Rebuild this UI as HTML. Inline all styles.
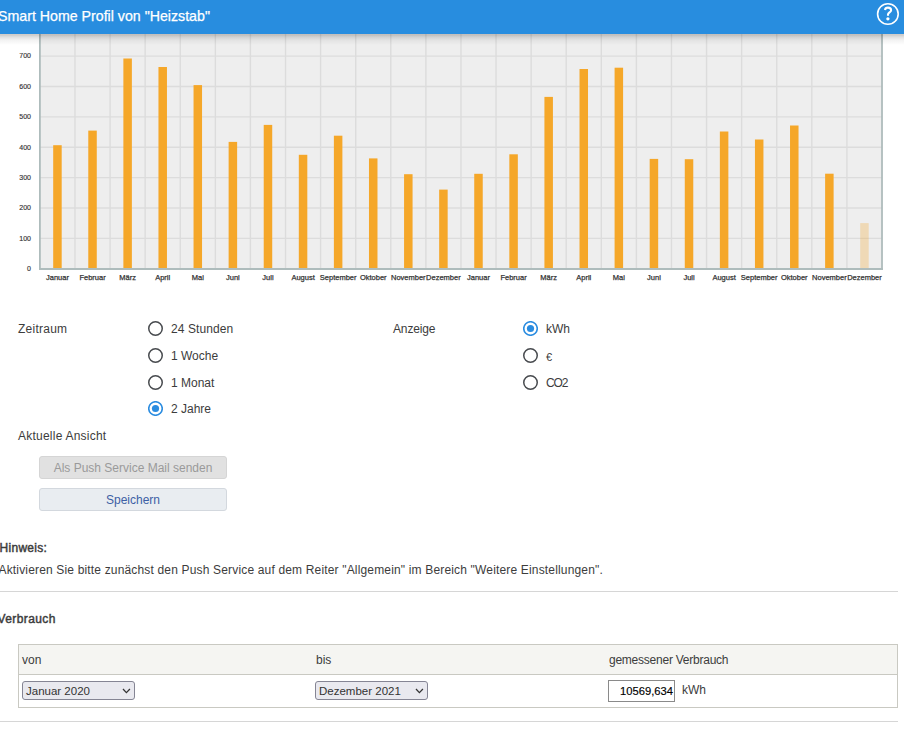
<!DOCTYPE html>
<html><head><meta charset="utf-8">
<style>
html,body{margin:0;padding:0;background:#fff;width:904px;height:732px;overflow:hidden;position:relative;font-family:"Liberation Sans",sans-serif;color:#3c3c3c}
.abs{position:absolute;white-space:nowrap}
#hdr{position:absolute;left:0;top:0;width:904px;height:34px;background:#288ddf;z-index:3}
#shadow{position:absolute;left:0;top:34px;width:904px;height:11px;background:linear-gradient(rgba(90,50,20,0.24) 0px,rgba(0,0,0,0.2) 1px,rgba(0,0,0,0.12) 3px,rgba(0,0,0,0.05) 6px,rgba(0,0,0,0) 11px);z-index:2}
#title{position:absolute;left:-2px;top:8px;font-size:14.2px;color:#fff;line-height:16px;-webkit-text-stroke:0.25px #fff}
#chart{position:absolute;left:0;top:0;z-index:1}
.yl{font-family:"Liberation Sans",sans-serif;font-size:7px;fill:#333;stroke:#333;stroke-width:0.15px}
.xl{font-family:"Liberation Sans",sans-serif;font-size:7.5px;fill:#333;stroke:#333;stroke-width:0.25px}
.t{position:absolute;white-space:nowrap;font-size:12px;line-height:14px;color:#3c3c3c}
.radio{position:absolute;width:12.4px;height:12.4px;border:1.6px solid #474747;border-radius:50%;box-sizing:content-box}
.radio.on{border-color:#2a8ce0}
.radio.on::after{content:"";position:absolute;left:2.6px;top:2.6px;width:7.2px;height:7.2px;border-radius:50%;background:#2a8ce0}
.btn{position:absolute;box-sizing:border-box;border-radius:3px;font-size:12px;text-align:center;line-height:22px}
.hr{position:absolute;left:0;width:898px;height:1px;background:#d6d6d6}
</style></head><body>
<div id="hdr"><div id="title">Smart Home Profil von "Heizstab"</div>
<svg style="position:absolute;left:864px;top:0" width="40" height="34" viewBox="0 0 40 34">
<circle cx="23.9" cy="14" r="10.3" fill="none" stroke="#fff" stroke-width="1.6"/>
<path d="M21.0 10.0 C21.2 8.4 22.4 7.6 24.0 7.6 C25.9 7.6 27.1 8.7 27.1 10.2 C27.1 12.3 24.0 12.6 24.0 14.6 L24.0 15.8" fill="none" stroke="#fff" stroke-width="2.1"/>
<circle cx="23.9" cy="18.8" r="1.65" fill="#fff"/>
</svg></div>
<div id="shadow"></div>
<svg id="chart" width="904" height="290" viewBox="0 0 904 290">
<rect x="39.9" y="34" width="842.1" height="235.0" fill="#eeeeee"/>
<line x1="39.9" x2="882.0" y1="238.42" y2="238.42" stroke="#dcdcdc" stroke-width="1.4"/>
<line x1="39.9" x2="882.0" y1="208.04" y2="208.04" stroke="#dcdcdc" stroke-width="1.4"/>
<line x1="39.9" x2="882.0" y1="177.66" y2="177.66" stroke="#dcdcdc" stroke-width="1.4"/>
<line x1="39.9" x2="882.0" y1="147.28" y2="147.28" stroke="#dcdcdc" stroke-width="1.4"/>
<line x1="39.9" x2="882.0" y1="116.90" y2="116.90" stroke="#dcdcdc" stroke-width="1.4"/>
<line x1="39.9" x2="882.0" y1="86.52" y2="86.52" stroke="#dcdcdc" stroke-width="1.4"/>
<line x1="39.9" x2="882.0" y1="56.14" y2="56.14" stroke="#dcdcdc" stroke-width="1.4"/>
<line x1="74.99" x2="74.99" y1="34" y2="269.0" stroke="#dcdcdc" stroke-width="1.4"/>
<line x1="110.07" x2="110.07" y1="34" y2="269.0" stroke="#dcdcdc" stroke-width="1.4"/>
<line x1="145.16" x2="145.16" y1="34" y2="269.0" stroke="#dcdcdc" stroke-width="1.4"/>
<line x1="180.25" x2="180.25" y1="34" y2="269.0" stroke="#dcdcdc" stroke-width="1.4"/>
<line x1="215.34" x2="215.34" y1="34" y2="269.0" stroke="#dcdcdc" stroke-width="1.4"/>
<line x1="250.42" x2="250.42" y1="34" y2="269.0" stroke="#dcdcdc" stroke-width="1.4"/>
<line x1="285.51" x2="285.51" y1="34" y2="269.0" stroke="#dcdcdc" stroke-width="1.4"/>
<line x1="320.60" x2="320.60" y1="34" y2="269.0" stroke="#dcdcdc" stroke-width="1.4"/>
<line x1="355.69" x2="355.69" y1="34" y2="269.0" stroke="#dcdcdc" stroke-width="1.4"/>
<line x1="390.77" x2="390.77" y1="34" y2="269.0" stroke="#dcdcdc" stroke-width="1.4"/>
<line x1="425.86" x2="425.86" y1="34" y2="269.0" stroke="#dcdcdc" stroke-width="1.4"/>
<line x1="460.95" x2="460.95" y1="34" y2="269.0" stroke="#dcdcdc" stroke-width="1.4"/>
<line x1="496.04" x2="496.04" y1="34" y2="269.0" stroke="#dcdcdc" stroke-width="1.4"/>
<line x1="531.12" x2="531.12" y1="34" y2="269.0" stroke="#dcdcdc" stroke-width="1.4"/>
<line x1="566.21" x2="566.21" y1="34" y2="269.0" stroke="#dcdcdc" stroke-width="1.4"/>
<line x1="601.30" x2="601.30" y1="34" y2="269.0" stroke="#dcdcdc" stroke-width="1.4"/>
<line x1="636.39" x2="636.39" y1="34" y2="269.0" stroke="#dcdcdc" stroke-width="1.4"/>
<line x1="671.47" x2="671.47" y1="34" y2="269.0" stroke="#dcdcdc" stroke-width="1.4"/>
<line x1="706.56" x2="706.56" y1="34" y2="269.0" stroke="#dcdcdc" stroke-width="1.4"/>
<line x1="741.65" x2="741.65" y1="34" y2="269.0" stroke="#dcdcdc" stroke-width="1.4"/>
<line x1="776.74" x2="776.74" y1="34" y2="269.0" stroke="#dcdcdc" stroke-width="1.4"/>
<line x1="811.82" x2="811.82" y1="34" y2="269.0" stroke="#dcdcdc" stroke-width="1.4"/>
<line x1="846.91" x2="846.91" y1="34" y2="269.0" stroke="#dcdcdc" stroke-width="1.4"/>
<rect x="53.19" y="145.2" width="8.5" height="123.80" fill="#f5a729"/>
<rect x="88.28" y="130.6" width="8.5" height="138.40" fill="#f5a729"/>
<rect x="123.37" y="58.5" width="8.5" height="210.50" fill="#f5a729"/>
<rect x="158.46" y="67" width="8.5" height="202.00" fill="#f5a729"/>
<rect x="193.54" y="85.1" width="8.5" height="183.90" fill="#f5a729"/>
<rect x="228.63" y="141.9" width="8.5" height="127.10" fill="#f5a729"/>
<rect x="263.72" y="124.9" width="8.5" height="144.10" fill="#f5a729"/>
<rect x="298.81" y="154.8" width="8.5" height="114.20" fill="#f5a729"/>
<rect x="333.89" y="135.7" width="8.5" height="133.30" fill="#f5a729"/>
<rect x="368.98" y="158.4" width="8.5" height="110.60" fill="#f5a729"/>
<rect x="404.07" y="174.2" width="8.5" height="94.80" fill="#f5a729"/>
<rect x="439.16" y="189.6" width="8.5" height="79.40" fill="#f5a729"/>
<rect x="474.24" y="173.8" width="8.5" height="95.20" fill="#f5a729"/>
<rect x="509.33" y="154.3" width="8.5" height="114.70" fill="#f5a729"/>
<rect x="544.42" y="96.9" width="8.5" height="172.10" fill="#f5a729"/>
<rect x="579.51" y="69" width="8.5" height="200.00" fill="#f5a729"/>
<rect x="614.59" y="67.7" width="8.5" height="201.30" fill="#f5a729"/>
<rect x="649.68" y="158.9" width="8.5" height="110.10" fill="#f5a729"/>
<rect x="684.77" y="159.2" width="8.5" height="109.80" fill="#f5a729"/>
<rect x="719.86" y="131.5" width="8.5" height="137.50" fill="#f5a729"/>
<rect x="754.94" y="139.5" width="8.5" height="129.50" fill="#f5a729"/>
<rect x="790.03" y="125.5" width="8.5" height="143.50" fill="#f5a729"/>
<rect x="825.12" y="173.7" width="8.5" height="95.30" fill="#f5a729"/>
<rect x="860.21" y="223.1" width="8.5" height="45.90" fill="#f5a729" fill-opacity="0.28"/>
<line x1="39.9" x2="39.9" y1="34" y2="269.9" stroke="#aebcbc" stroke-width="1.8"/>
<line x1="882.0" x2="882.0" y1="34" y2="269.9" stroke="#aebcbc" stroke-width="1.8"/>
<line x1="39.0" x2="882.9" y1="269.0" y2="269.0" stroke="#aebcbc" stroke-width="1.8"/>
<text x="31" y="271.10" text-anchor="end" class="yl">0</text>
<text x="31" y="240.72" text-anchor="end" class="yl">100</text>
<text x="31" y="210.34" text-anchor="end" class="yl">200</text>
<text x="31" y="179.96" text-anchor="end" class="yl">300</text>
<text x="31" y="149.58" text-anchor="end" class="yl">400</text>
<text x="31" y="119.20" text-anchor="end" class="yl">500</text>
<text x="31" y="88.82" text-anchor="end" class="yl">600</text>
<text x="31" y="58.44" text-anchor="end" class="yl">700</text>
<text x="57.44" y="279.8" text-anchor="middle" class="xl">Januar</text>
<text x="92.53" y="279.8" text-anchor="middle" class="xl">Februar</text>
<text x="127.62" y="279.8" text-anchor="middle" class="xl">März</text>
<text x="162.71" y="279.8" text-anchor="middle" class="xl">April</text>
<text x="197.79" y="279.8" text-anchor="middle" class="xl">Mai</text>
<text x="232.88" y="279.8" text-anchor="middle" class="xl">Juni</text>
<text x="267.97" y="279.8" text-anchor="middle" class="xl">Juli</text>
<text x="303.06" y="279.8" text-anchor="middle" class="xl">August</text>
<text x="338.14" y="279.8" text-anchor="middle" class="xl">September</text>
<text x="373.23" y="279.8" text-anchor="middle" class="xl">Oktober</text>
<text x="408.32" y="279.8" text-anchor="middle" class="xl">November</text>
<text x="443.41" y="279.8" text-anchor="middle" class="xl">Dezember</text>
<text x="478.49" y="279.8" text-anchor="middle" class="xl">Januar</text>
<text x="513.58" y="279.8" text-anchor="middle" class="xl">Februar</text>
<text x="548.67" y="279.8" text-anchor="middle" class="xl">März</text>
<text x="583.76" y="279.8" text-anchor="middle" class="xl">April</text>
<text x="618.84" y="279.8" text-anchor="middle" class="xl">Mai</text>
<text x="653.93" y="279.8" text-anchor="middle" class="xl">Juni</text>
<text x="689.02" y="279.8" text-anchor="middle" class="xl">Juli</text>
<text x="724.11" y="279.8" text-anchor="middle" class="xl">August</text>
<text x="759.19" y="279.8" text-anchor="middle" class="xl">September</text>
<text x="794.28" y="279.8" text-anchor="middle" class="xl">Oktober</text>
<text x="829.37" y="279.8" text-anchor="middle" class="xl">November</text>
<text x="864.46" y="279.8" text-anchor="middle" class="xl">Dezember</text>
</svg>

<div class="t" style="left:18px;top:322px;letter-spacing:0.25px">Zeitraum</div>
<svg style="position:absolute;left:148.0px;top:321.0px" width="15" height="15"><circle cx="7.5" cy="7.5" r="6.75" fill="none" stroke="#474a4e" stroke-width="1.5"/></svg>
<div class="t" style="left:171px;top:322px;letter-spacing:0.1px">24 Stunden</div>
<svg style="position:absolute;left:148.0px;top:347.9px" width="15" height="15"><circle cx="7.5" cy="7.5" r="6.75" fill="none" stroke="#474a4e" stroke-width="1.5"/></svg>
<div class="t" style="left:171px;top:349px">1 Woche</div>
<svg style="position:absolute;left:148.0px;top:375.0px" width="15" height="15"><circle cx="7.5" cy="7.5" r="6.75" fill="none" stroke="#474a4e" stroke-width="1.5"/></svg>
<div class="t" style="left:171px;top:376px">1 Monat</div>
<svg style="position:absolute;left:148.0px;top:400.9px" width="15" height="15"><circle cx="7.5" cy="7.5" r="6.75" fill="none" stroke="#2a8ce0" stroke-width="1.6"/><circle cx="7.5" cy="7.5" r="3.6" fill="#2a8ce0"/></svg>
<div class="t" style="left:171px;top:402px">2 Jahre</div>

<div class="t" style="left:393px;top:322px;letter-spacing:-0.15px">Anzeige</div>
<svg style="position:absolute;left:523.0px;top:321.0px" width="15" height="15"><circle cx="7.5" cy="7.5" r="6.75" fill="none" stroke="#2a8ce0" stroke-width="1.6"/><circle cx="7.5" cy="7.5" r="3.6" fill="#2a8ce0"/></svg>
<div class="t" style="left:546px;top:322px">kWh</div>
<svg style="position:absolute;left:523.0px;top:347.9px" width="15" height="15"><circle cx="7.5" cy="7.5" r="6.75" fill="none" stroke="#474a4e" stroke-width="1.5"/></svg>
<div class="t" style="left:546px;top:349.5px;font-size:11px">€</div>
<svg style="position:absolute;left:523.0px;top:375.0px" width="15" height="15"><circle cx="7.5" cy="7.5" r="6.75" fill="none" stroke="#474a4e" stroke-width="1.5"/></svg>
<div class="t" style="left:546px;top:376px;letter-spacing:-1.1px">CO2</div>

<div class="t" style="left:18px;top:429px;letter-spacing:0.23px">Aktuelle Ansicht</div>
<div class="btn" style="left:39px;top:456px;width:188px;height:23px;background:#e1e1e1;border:1px solid #d5d5d5;color:#9a9a9a">Als Push Service Mail senden</div>
<div class="btn" style="left:39px;top:488px;width:188px;height:23px;background:#e9edf1;border:1px solid #d3d8de;color:#3d5fa5">Speichern</div>

<div class="t" style="left:-0.5px;top:541px;-webkit-text-stroke:0.45px #3c3c3c;letter-spacing:0.3px">Hinweis:</div>
<div class="t" style="left:-1.5px;top:563px;letter-spacing:0.165px">Aktivieren Sie bitte zunächst den Push Service auf dem Reiter "Allgemein" im Bereich "Weitere Einstellungen".</div>
<div class="hr" style="top:591px"></div>
<div class="t" style="left:-2.5px;top:612px;-webkit-text-stroke:0.45px #3c3c3c;letter-spacing:0.4px">Verbrauch</div>

<div style="position:absolute;left:18px;top:644px;width:880px;height:64px;box-sizing:border-box;border:1px solid #c9c9c2"></div>
<div style="position:absolute;left:19px;top:645px;width:878px;height:29px;background:#f5f5f2;border-bottom:1px solid #c9c9c2"></div>
<div class="t" style="left:22px;top:653px">von</div>
<div class="t" style="left:316px;top:653px">bis</div>
<div class="t" style="left:609px;top:653px;letter-spacing:-0.24px">gemessener Verbrauch</div>

<div style="position:absolute;left:22px;top:681px;width:113px;height:19px;box-sizing:border-box;border:1px solid #858594;border-radius:3px;background:#e9e9ef"></div>
<div class="t" style="left:26px;top:684px;color:#333;font-size:11.5px">Januar 2020</div>
<svg style="position:absolute;left:120px;top:685px" width="12" height="10"><path d="M3 4 L6.4 7.6 L9.9 4" fill="none" stroke="#333" stroke-width="1.3"/></svg>
<div style="position:absolute;left:315px;top:681px;width:113px;height:19px;box-sizing:border-box;border:1px solid #858594;border-radius:3px;background:#e9e9ef"></div>
<div class="t" style="left:319px;top:684px;color:#333;font-size:11.5px">Dezember 2021</div>
<svg style="position:absolute;left:413px;top:685px" width="12" height="10"><path d="M3 4 L6.4 7.6 L9.9 4" fill="none" stroke="#333" stroke-width="1.3"/></svg>
<div style="position:absolute;left:608px;top:680px;width:67px;height:22px;box-sizing:border-box;border:1px solid #8a8a8a;background:#fff"></div>
<div class="t" style="left:608px;top:684px;width:65px;text-align:right;color:#000;font-size:11.2px;-webkit-text-stroke:0.15px #000">10569,634</div>
<div class="t" style="left:682px;top:683px">kWh</div>
<div class="hr" style="top:721px"></div>
</body></html>
